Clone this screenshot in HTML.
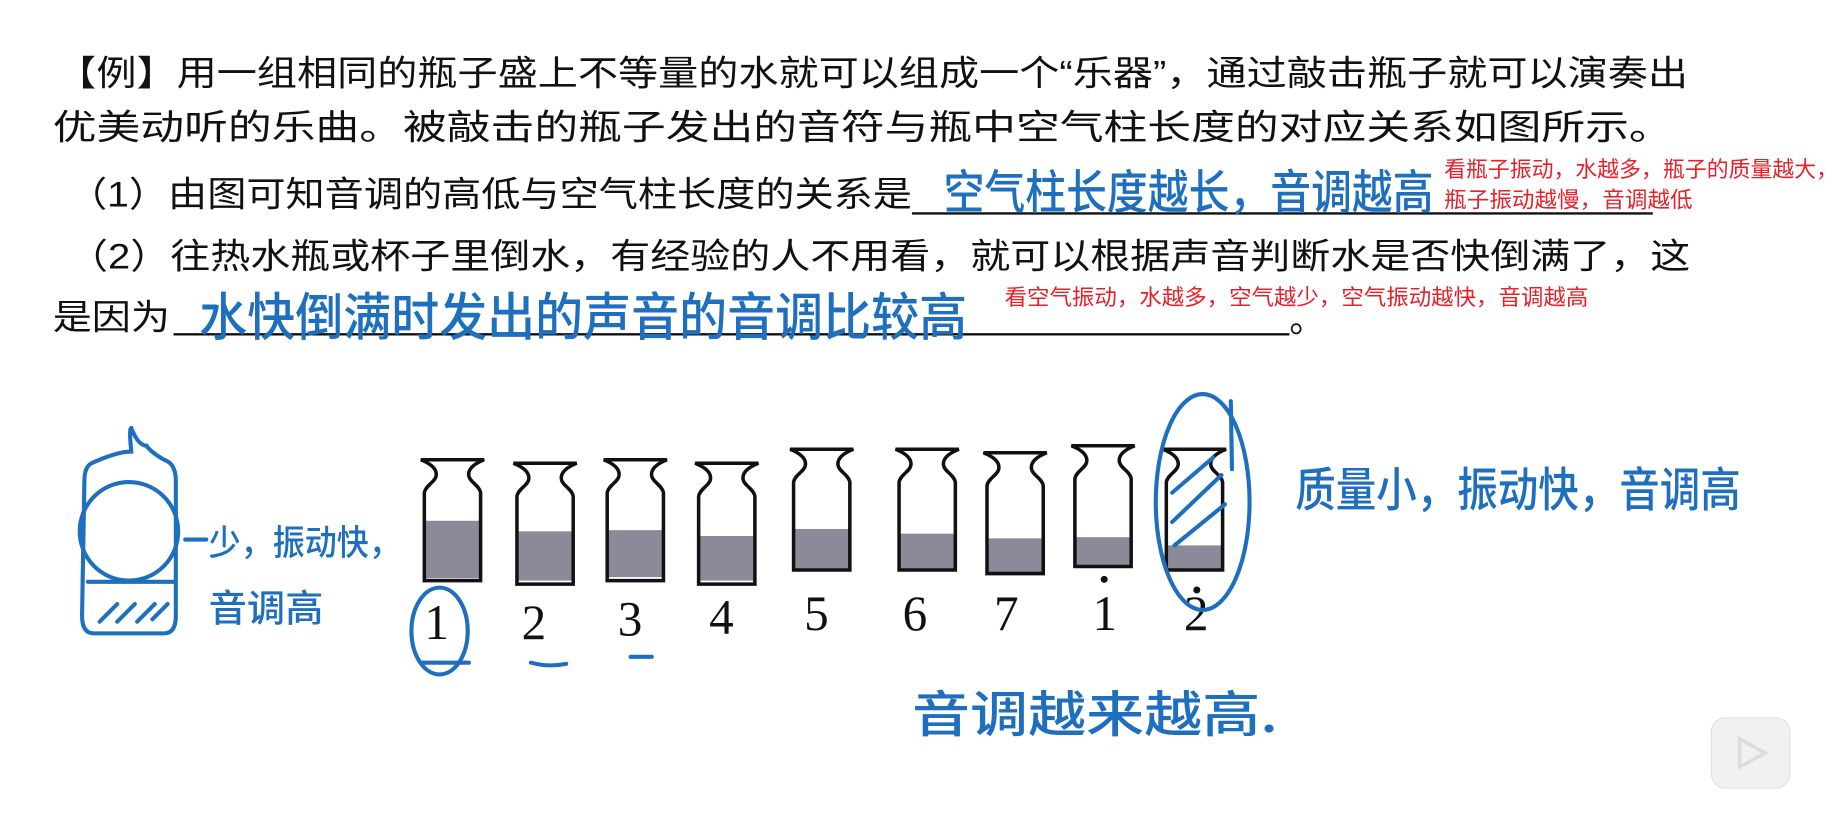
<!DOCTYPE html>
<html><head><meta charset="utf-8"><style>
html,body{margin:0;padding:0;background:#fff;width:1838px;height:814px;overflow:hidden}
svg{display:block}
.t{font-family:"Liberation Sans","Noto Sans CJK SC",sans-serif;fill:#111;font-size:30px}
.r{font-family:"Liberation Sans","Noto Sans CJK SC",sans-serif;fill:#e8202a;font-size:19px}
.b{font-family:"Noto Sans CJK SC",sans-serif;fill:#1f6fbf;font-weight:500}
.n{font-family:"Liberation Serif",serif;fill:#111;font-size:42px}
</style></head><body>
<svg width="1838" height="814" viewBox="0 0 1568 694" preserveAspectRatio="none">
<defs>
<path id="bot" d="M2,0 L56,0 C46,4 42,9 43,14 C44,19 52,22 53,28 L53,103 L5,103 L5,28 C6,22 14,19 15,14 C16,9 12,4 2,0 Z" fill="none" stroke="#111" stroke-width="3"/>
</defs>
<text class="t" x="48" y="73" textLength="1392" lengthAdjust="spacingAndGlyphs">【例】用一组相同的瓶子盛上不等量的水就可以组成一个“乐器”，通过敲击瓶子就可以演奏出</text>
<text class="t" x="45" y="119" textLength="1382" lengthAdjust="spacingAndGlyphs">优美动听的乐曲。被敲击的瓶子发出的音符与瓶中空气柱长度的对应关系如图所示。</text>
<text class="t" x="58" y="176" textLength="720" lengthAdjust="spacingAndGlyphs">（1）由图可知音调的高低与空气柱长度的关系是</text>
<line x1="778" y1="182" x2="1410" y2="182" stroke="#111" stroke-width="2"/>
<text class="t" x="58" y="229" textLength="1384" lengthAdjust="spacingAndGlyphs">（2）往热水瓶或杯子里倒水，有经验的人不用看，就可以根据声音判断水是否快倒满了，这</text>
<text class="t" x="45" y="281" textLength="100" lengthAdjust="spacingAndGlyphs">是因为</text>
<line x1="148" y1="285" x2="1100" y2="285" stroke="#111" stroke-width="2"/>
<text class="t" x="1100" y="283">。</text>
<text class="r" x="1232" y="151" textLength="336" lengthAdjust="spacingAndGlyphs">看瓶子振动，水越多，瓶子的质量越大，</text>
<text class="r" x="1232" y="177" textLength="212" lengthAdjust="spacingAndGlyphs">瓶子振动越慢，音调越低</text>
<text class="r" x="857" y="260" textLength="498" lengthAdjust="spacingAndGlyphs">看空气振动，水越多，空气越少，空气振动越快，音调越高</text>
<text class="b" x="805" y="178" font-size="40" textLength="418" lengthAdjust="spacingAndGlyphs">空气柱长度越长，音调越高</text>
<text class="b" x="170" y="286" font-size="44" textLength="655" lengthAdjust="spacingAndGlyphs">水快倒满时发出的声音的音调比较高</text>
<text class="b" x="1105" y="432" font-size="40" textLength="380" lengthAdjust="spacingAndGlyphs">质量小，振动快，音调高</text>
<text class="b" x="178" y="473" font-size="30" textLength="164" lengthAdjust="spacingAndGlyphs">少，振动快，</text>
<text class="b" x="178" y="530" font-size="32" textLength="98" lengthAdjust="spacingAndGlyphs">音调高</text>
<text class="b" x="778" y="624" font-size="42" textLength="312" lengthAdjust="spacingAndGlyphs">音调越来越高.</text>
<g>
<rect x="362" y="444" width="48" height="49" fill="#8a8a98"/><use href="#bot" x="357" y="392"/>
<rect x="441" y="453" width="48" height="42" fill="#8a8a98"/><use href="#bot" x="436" y="395"/>
<rect x="518" y="452" width="48" height="40" fill="#8a8a98"/><use href="#bot" x="513" y="392"/>
<rect x="596" y="457" width="48" height="38" fill="#8a8a98"/><use href="#bot" x="591" y="395"/>
<rect x="677" y="451" width="48" height="34" fill="#8a8a98"/><use href="#bot" x="672" y="383"/>
<rect x="767" y="455" width="48" height="30" fill="#8a8a98"/><use href="#bot" x="762" y="383"/>
<rect x="842" y="459" width="48" height="29" fill="#8a8a98"/><use href="#bot" x="837" y="386"/>
<rect x="917" y="458" width="48" height="24" fill="#8a8a98"/><use href="#bot" x="912" y="380"/>
<rect x="995" y="465" width="48" height="20" fill="#8a8a98"/><use href="#bot" x="990" y="383"/>
</g>
<text class="n" x="362" y="545">1</text>
<text class="n" x="445" y="545">2</text>
<text class="n" x="527" y="542">3</text>
<text class="n" x="605" y="540">4</text>
<text class="n" x="686" y="537">5</text>
<text class="n" x="770" y="537">6</text>
<text class="n" x="848" y="537">7</text>
<text class="n" x="932" y="537">1</text>
<circle cx="942" cy="494" r="3" fill="#111"/>
<text class="n" x="1010" y="537">2</text>
<circle cx="1021" cy="503" r="3" fill="#111"/>
<g fill="none" stroke="#1f6fbf" stroke-width="3.5" stroke-linecap="round">
<ellipse cx="375" cy="538" rx="24" ry="37"/>
<path d="M360 565 L400 565 M453 565 Q468 569 483 566 M538 560 L556 560"/>
<ellipse cx="1026" cy="428" rx="40" ry="92"/>
<path d="M1050 342 L1051 400 M1000 420 L1035 390 M1000 445 L1042 405 M1002 465 L1045 430"/>
<path d="M78 395 Q100 385 112 385 Q110 365 112 365 Q118 380 125 380 Q128 385 140 392 Q150 395 150 410 L150 525 Q150 540 140 540 L80 540 Q70 540 70 525 L72 410 Q72 398 78 395 Z"/>
<circle cx="110" cy="453" r="42"/>
<path d="M75 496 L148 496 M85 530 L100 515 M100 530 L115 515 M117 530 L132 515 M130 528 L143 515 M158 460 L176 460"/>
</g>
<rect x="1460" y="612" width="67" height="60" rx="12" fill="#f1f1f1" stroke="#e2e2e2"/>
<path d="M1484 630 L1506 642 L1484 654 Z" fill="none" stroke="#dcdcdc" stroke-width="3"/>
</svg>
</body></html>
